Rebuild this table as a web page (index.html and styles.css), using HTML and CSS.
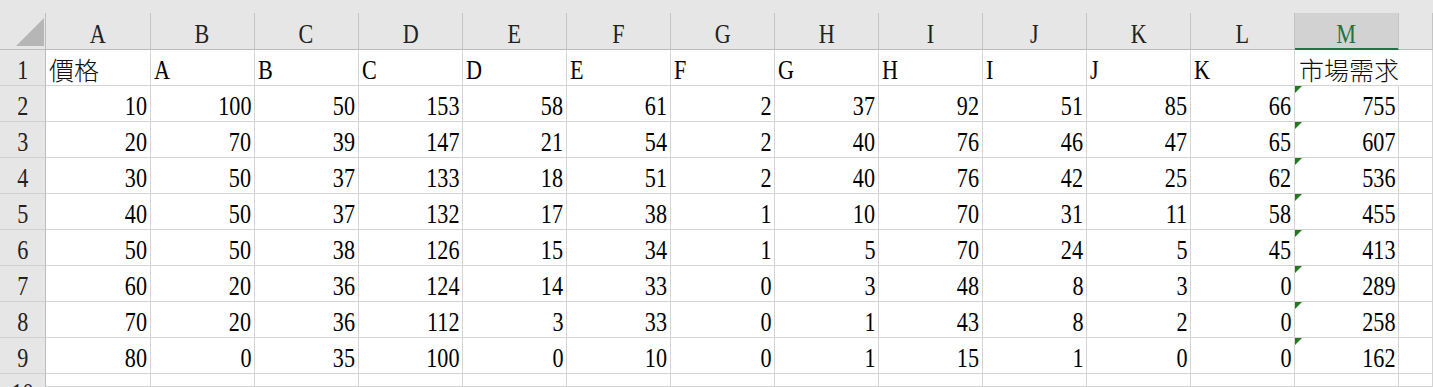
FILE: index.html
```html
<!DOCTYPE html>
<html lang="zh-Hant">
<head>
<meta charset="utf-8">
<title>Sheet</title>
<link rel="stylesheet" href="styles.css">
</head>
<body>
<div class="strip"></div>
<div class="sheet">
  <div class="corner"><div class="tri"></div></div>
  <div class="ch"><span class="v">A</span></div>
  <div class="ch"><span class="v">B</span></div>
  <div class="ch"><span class="v">C</span></div>
  <div class="ch"><span class="v">D</span></div>
  <div class="ch"><span class="v">E</span></div>
  <div class="ch"><span class="v">F</span></div>
  <div class="ch"><span class="v">G</span></div>
  <div class="ch"><span class="v">H</span></div>
  <div class="ch"><span class="v">I</span></div>
  <div class="ch"><span class="v">J</span></div>
  <div class="ch"><span class="v">K</span></div>
  <div class="ch"><span class="v">L</span></div>
  <div class="ch sel"><span class="v">M</span></div>
  <div class="ch"></div>

  <div class="rh"><span class="v">1</span></div>
  <div class="c l"><span class="cjk">價格</span></div>
  <div class="c l"><span class="v">A</span></div>
  <div class="c l"><span class="v">B</span></div>
  <div class="c l"><span class="v">C</span></div>
  <div class="c l"><span class="v">D</span></div>
  <div class="c l"><span class="v">E</span></div>
  <div class="c l"><span class="v">F</span></div>
  <div class="c l"><span class="v">G</span></div>
  <div class="c l"><span class="v">H</span></div>
  <div class="c l"><span class="v">I</span></div>
  <div class="c l"><span class="v">J</span></div>
  <div class="c l"><span class="v">K</span></div>
  <div class="c l over"><span class="cjk">市場需求</span></div>
  <div class="c"></div>

  <div class="rh"><span class="v">2</span></div>
  <div class="c"><span class="v">10</span></div><div class="c"><span class="v">100</span></div><div class="c"><span class="v">50</span></div><div class="c"><span class="v">153</span></div><div class="c"><span class="v">58</span></div><div class="c"><span class="v">61</span></div><div class="c"><span class="v">2</span></div><div class="c"><span class="v">37</span></div><div class="c"><span class="v">92</span></div><div class="c"><span class="v">51</span></div><div class="c"><span class="v">85</span></div><div class="c"><span class="v">66</span></div><div class="c flag"><span class="v">755</span></div><div class="c"></div>

  <div class="rh"><span class="v">3</span></div>
  <div class="c"><span class="v">20</span></div><div class="c"><span class="v">70</span></div><div class="c"><span class="v">39</span></div><div class="c"><span class="v">147</span></div><div class="c"><span class="v">21</span></div><div class="c"><span class="v">54</span></div><div class="c"><span class="v">2</span></div><div class="c"><span class="v">40</span></div><div class="c"><span class="v">76</span></div><div class="c"><span class="v">46</span></div><div class="c"><span class="v">47</span></div><div class="c"><span class="v">65</span></div><div class="c flag"><span class="v">607</span></div><div class="c"></div>

  <div class="rh"><span class="v">4</span></div>
  <div class="c"><span class="v">30</span></div><div class="c"><span class="v">50</span></div><div class="c"><span class="v">37</span></div><div class="c"><span class="v">133</span></div><div class="c"><span class="v">18</span></div><div class="c"><span class="v">51</span></div><div class="c"><span class="v">2</span></div><div class="c"><span class="v">40</span></div><div class="c"><span class="v">76</span></div><div class="c"><span class="v">42</span></div><div class="c"><span class="v">25</span></div><div class="c"><span class="v">62</span></div><div class="c flag"><span class="v">536</span></div><div class="c"></div>

  <div class="rh"><span class="v">5</span></div>
  <div class="c"><span class="v">40</span></div><div class="c"><span class="v">50</span></div><div class="c"><span class="v">37</span></div><div class="c"><span class="v">132</span></div><div class="c"><span class="v">17</span></div><div class="c"><span class="v">38</span></div><div class="c"><span class="v">1</span></div><div class="c"><span class="v">10</span></div><div class="c"><span class="v">70</span></div><div class="c"><span class="v">31</span></div><div class="c"><span class="v">11</span></div><div class="c"><span class="v">58</span></div><div class="c flag"><span class="v">455</span></div><div class="c"></div>

  <div class="rh"><span class="v">6</span></div>
  <div class="c"><span class="v">50</span></div><div class="c"><span class="v">50</span></div><div class="c"><span class="v">38</span></div><div class="c"><span class="v">126</span></div><div class="c"><span class="v">15</span></div><div class="c"><span class="v">34</span></div><div class="c"><span class="v">1</span></div><div class="c"><span class="v">5</span></div><div class="c"><span class="v">70</span></div><div class="c"><span class="v">24</span></div><div class="c"><span class="v">5</span></div><div class="c"><span class="v">45</span></div><div class="c flag"><span class="v">413</span></div><div class="c"></div>

  <div class="rh"><span class="v">7</span></div>
  <div class="c"><span class="v">60</span></div><div class="c"><span class="v">20</span></div><div class="c"><span class="v">36</span></div><div class="c"><span class="v">124</span></div><div class="c"><span class="v">14</span></div><div class="c"><span class="v">33</span></div><div class="c"><span class="v">0</span></div><div class="c"><span class="v">3</span></div><div class="c"><span class="v">48</span></div><div class="c"><span class="v">8</span></div><div class="c"><span class="v">3</span></div><div class="c"><span class="v">0</span></div><div class="c flag"><span class="v">289</span></div><div class="c"></div>

  <div class="rh"><span class="v">8</span></div>
  <div class="c"><span class="v">70</span></div><div class="c"><span class="v">20</span></div><div class="c"><span class="v">36</span></div><div class="c"><span class="v">112</span></div><div class="c"><span class="v">3</span></div><div class="c"><span class="v">33</span></div><div class="c"><span class="v">0</span></div><div class="c"><span class="v">1</span></div><div class="c"><span class="v">43</span></div><div class="c"><span class="v">8</span></div><div class="c"><span class="v">2</span></div><div class="c"><span class="v">0</span></div><div class="c flag"><span class="v">258</span></div><div class="c"></div>

  <div class="rh"><span class="v">9</span></div>
  <div class="c"><span class="v">80</span></div><div class="c"><span class="v">0</span></div><div class="c"><span class="v">35</span></div><div class="c"><span class="v">100</span></div><div class="c"><span class="v">0</span></div><div class="c"><span class="v">10</span></div><div class="c"><span class="v">0</span></div><div class="c"><span class="v">1</span></div><div class="c"><span class="v">15</span></div><div class="c"><span class="v">1</span></div><div class="c"><span class="v">0</span></div><div class="c"><span class="v">0</span></div><div class="c flag"><span class="v">162</span></div><div class="c"></div>

  <div class="rh top"><span class="v">10</span></div>
  <div class="c"></div><div class="c"></div><div class="c"></div><div class="c"></div><div class="c"></div><div class="c"></div><div class="c"></div><div class="c"></div><div class="c"></div><div class="c"></div><div class="c"></div><div class="c"></div><div class="c"></div><div class="c"></div>
</div>
</body>
</html>
```

FILE: styles.css
```css
html, body {
  margin: 0;
  padding: 0;
  background: #e6e6e6;
  overflow: hidden;
  height: 387px;
}

.strip {
  height: 13px;
  background: #e6e6e6;
}

.sheet {
  display: grid;
  grid-template-columns: 46px 105px repeat(12, 104px) 1fr;
  grid-template-rows: 37px repeat(9, 36px) 13px;
  font-family: "Liberation Serif", "Noto Sans CJK TC", serif;
  font-size: 27px;
  line-height: 27px;
  color: #000;
}

.v {
  display: inline-block;
  transform: scaleX(0.82);
  transform-origin: right bottom;
  white-space: nowrap;
}

.corner {
  background: #e6e6e6;
  border-right: 1px solid #bcbcbc;
  border-bottom: 1px solid #bcbcbc;
  display: flex;
  justify-content: flex-end;
  align-items: flex-end;
  padding: 0 1px 3px 0;
  box-sizing: border-box;
}

.tri {
  width: 28px;
  height: 28px;
  background: #b6b6b6;
  clip-path: polygon(100% 0, 100% 100%, 0 100%);
}

.ch {
  background: #e6e6e6;
  border-right: 1px solid #c4c4c4;
  border-bottom: 1px solid #bcbcbc;
  box-sizing: border-box;
  display: flex;
  justify-content: center;
  align-items: flex-end;
  padding-bottom: 1px;
  color: #222;
}

.ch .v {
  transform-origin: center bottom;
}

.ch.sel {
  background: #d2d2d2;
  color: #217346;
  border-bottom-color: #217346;
  box-shadow: inset 0 -1px 0 #217346;
}

.rh {
  background: #e6e6e6;
  border-right: 1px solid #bcbcbc;
  border-bottom: 1px solid #d0d0d0;
  box-sizing: border-box;
  display: flex;
  justify-content: center;
  align-items: flex-end;
  padding-bottom: 1px;
  color: #222;
}

.rh .v {
  transform-origin: center bottom;
}

.rh.top {
  align-items: flex-start;
  padding-top: 6px;
  overflow: hidden;
  border-bottom: 0;
}

.c {
  position: relative;
  background: #fff;
  border-right: 1px solid #d4d4d4;
  border-bottom: 1px solid #d4d4d4;
  box-sizing: border-box;
  display: flex;
  justify-content: flex-end;
  align-items: flex-end;
  padding: 0 3px 1px 3px;
  min-width: 0;
}

.c.l {
  justify-content: flex-start;
}

.c.l .v {
  transform-origin: left bottom;
}

.cjk {
  font-family: "Noto Sans CJK TC", sans-serif;
  font-size: 25px;
  font-weight: 300;
  line-height: 30px;
  white-space: nowrap;
  color: #111;
}

.c.over {
  overflow: visible;
  z-index: 1;
  border-right-color: transparent;
  padding-left: 4px;
}

.flag::before {
  content: "";
  position: absolute;
  left: 0;
  top: 0;
  width: 7px;
  height: 7px;
  background: #1e7b1e;
  clip-path: polygon(0 0, 100% 0, 0 100%);
}
```
